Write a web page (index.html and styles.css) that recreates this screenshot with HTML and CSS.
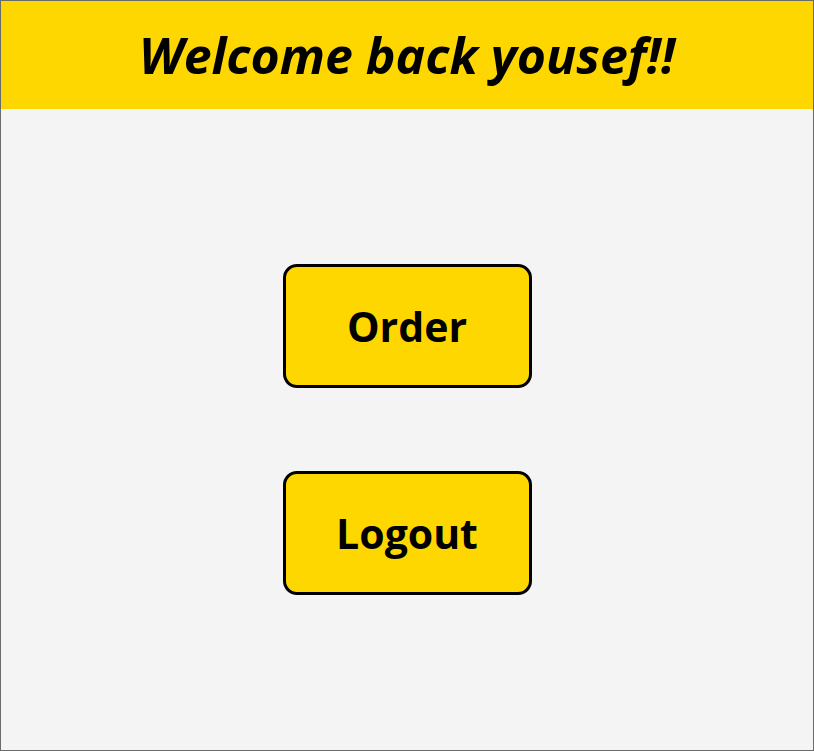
FILE: index.html
```html
<!DOCTYPE html>
<html>
<head>
<meta charset="utf-8">
<link rel="stylesheet" href="styles.css">
</head>
<body>
<div class="frame">
  <header class="top">
    <h1 class="title">Welcome back yousef!!</h1>
  </header>
  <main class="actions">
    <button class="btn">Order</button>
    <button class="btn">Logout</button>
  </main>
</div>
</body>
</html>
```
FILE: styles.css
```css
html, body {
  margin: 0;
  padding: 0;
  background: #f4f4f4;
}
.frame {
  box-sizing: border-box;
  width: 814px;
  height: 751px;
  border: 1px solid #6a6a6a;
  background: #f4f4f4;
  font-family: "Open Sans", sans-serif;
}
.top {
  background: #ffd700;
  height: 108px;
  display: flex;
  align-items: center;
  justify-content: center;
}
.title {
  margin: 0;
  font-size: 50px;
  font-weight: 700;
  font-style: italic;
  color: #000;
}
.actions {
  display: flex;
  flex-direction: column;
  align-items: center;
  padding-top: 155px;
  gap: 83px;
}
.btn {
  box-sizing: border-box;
  width: 249px;
  height: 124px;
  background: #ffd700;
  border: 3px solid #000;
  border-radius: 14px;
  font-family: "Open Sans", sans-serif;
  font-size: 41px;
  font-weight: 700;
  color: #000;
  padding: 0;
}
```
